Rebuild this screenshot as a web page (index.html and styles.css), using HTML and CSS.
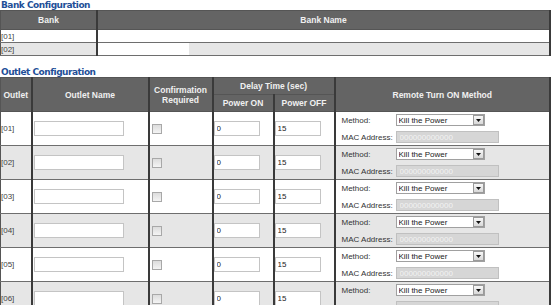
FILE: index.html
```html
<!DOCTYPE html>
<html>
<head>
<title>Outlet Setup</title>
<link rel="stylesheet" href="styles.css">
</head>
<body>

<h2 class="section-title">Bank Configuration</h2>
<table class="grid bank">
  <tr>
    <th class="col-bank">Bank</th>
    <th>Bank Name</th>
  </tr>
  <tr>
    <td class="idx">[01]</td>
    <td><input type="text" class="bank-name"></td>
  </tr>
  <tr class="alt">
    <td class="idx">[02]</td>
    <td><input type="text" class="bank-name"></td>
  </tr>
</table>

<h2 class="section-title outlet-title">Outlet Configuration</h2>
<table class="grid outlets">
  <colgroup>
    <col style="width:31px">
    <col style="width:117px">
    <col style="width:64px">
    <col style="width:61px">
    <col style="width:61px">
    <col>
  </colgroup>
  <thead>
    <tr class="head-top">
      <th rowspan="2">Outlet</th>
      <th rowspan="2">Outlet Name</th>
      <th rowspan="2">Confirmation<br>Required</th>
      <th colspan="2">Delay Time (sec)</th>
      <th rowspan="2">Remote Turn ON Method</th>
    </tr>
    <tr class="head-sub">
      <th>Power ON</th>
      <th>Power OFF</th>
    </tr>
  </thead>
  <tbody id="outletRows"></tbody>
</table>

<script>
var rows = "";
for (var i = 1; i <= 6; i++) {
  var num = "[0" + i + "]";
  rows += '<tr class="' + (i % 2 == 0 ? "alt" : "") + '">' +
    '<td class="idx">' + num + '</td>' +
    '<td class="name-cell"><input type="text" class="outlet-name"></td>' +
    '<td class="check-cell"><input type="checkbox" class="confirm"></td>' +
    '<td class="delay-cell"><input type="text" class="delay" value="0"></td>' +
    '<td class="delay-cell"><input type="text" class="delay" value="15"></td>' +
    '<td class="remote-cell">' +
      '<div class="remote">' +
        '<label>Method:</label>' +
        '<span class="select-wrap"><select><option>Kill the Power</option></select>' +
        '<span class="select-arrow"><svg width="5" height="3" viewBox="0 0 5 3"><path d="M0 0h5L2.5 3z" fill="#111"/></svg></span></span>' +
        '<label>MAC Address:</label>' +
        '<input type="text" class="mac" value="000000000000" disabled>' +
      '</div>' +
    '</td>' +
  '</tr>';
}
document.getElementById("outletRows").innerHTML = rows;
</script>

</body>
</html>
```

FILE: styles.css
```css
body {
  margin: 0;
  font-family: "Liberation Sans", Arial, sans-serif;
  font-size: 9px;
  color: #333;
  background: #fff;
}
.section-title {
  margin: 0 0 0 1px;
  height: 10px;
  line-height: 10px;
  font-family: "DejaVu Sans", Verdana, sans-serif;
  font-size: 9px;
  font-weight: bold;
  color: #1f4f98;
  letter-spacing: -0.5px;
}
.outlet-title {
  margin-top: 10px;
  height: 11px;
  line-height: 12px;
}
.grid {
  width: 551px;
  border-collapse: collapse;
  table-layout: fixed;
}
.grid th {
  background: #646464;
  color: #f0f0f0;
  font-family: "Liberation Sans", Tahoma, sans-serif;
  font-size: 8.5px;
  font-weight: bold;
  text-align: center;
  padding: 0;
  border: 1px solid #555;
  border-left: 2px solid #3a3a3a;
  border-right: 2px solid #3a3a3a;
}
.grid td {
  padding: 0;
  border-top: 1px solid #6e6e6e;
  border-bottom: 1px solid #6e6e6e;
  border-left: 2px solid #3a3a3a;
  border-right: 2px solid #3a3a3a;
  vertical-align: middle;
}
.grid tr.alt td {
  background: #e6e6e6;
}
.grid th:first-child,
.grid td:first-child {
  border-left: 1px solid #555;
}
.bank th {
  height: 18px;
}
.col-bank {
  width: 95px;
}
.bank td {
  height: 12px;
}
.idx {
  font-size: 8px;
  color: #444;
  padding-left: 1px;
}
input[type="text"] {
  box-sizing: border-box;
  margin: 0;
  font-family: "Liberation Sans", Arial, sans-serif;
  font-size: 8px;
  color: #222;
  background: #fff;
}
.bank-name {
  display: block;
  width: 91px;
  height: 12px;
  border: none;
}
.outlets .head-top th {
  height: 16px;
}
.outlets .head-sub th {
  height: 16px;
}
.outlets tbody td {
  height: 33px;
}
.outlet-name {
  display: block;
  width: 90px;
  height: 15px;
  margin-left: 1px !important;
  border: 1px solid #c4c4c4;
}
.check-cell {
  padding-left: 2px !important;
}
.confirm {
  appearance: none;
  display: block;
  margin: 0;
  width: 10px;
  height: 10px;
  border: 1px solid #a8a8a8;
  background: linear-gradient(#dcdcdc, #f4f4f4);
}
.delay {
  display: block;
  width: 46px;
  height: 15px;
  padding: 0 2px;
  border: 1px solid #c4c4c4;
}
.remote-cell {
  padding: 0 0 0 6px !important;
}
.remote {
  display: grid;
  grid-template-columns: 54px auto;
  align-items: center;
  row-gap: 5px;
}
.remote label {
  font-size: 8px;
  color: #333;
}
.select-wrap {
  position: relative;
  display: block;
  width: 89px;
  height: 12px;
}
.select-wrap select {
  appearance: none;
  box-sizing: border-box;
  display: block;
  width: 89px;
  height: 12px;
  margin: 0;
  padding: 0 2px;
  border: 1px solid #a0a0a0;
  background: #fff;
  font-family: "Liberation Sans", Arial, sans-serif;
  font-size: 8px;
  color: #222;
}
.select-arrow {
  position: absolute;
  top: 1px;
  right: 1px;
  width: 11px;
  height: 10px;
  box-sizing: border-box;
  border: 1px solid #9a9a9a;
  background: linear-gradient(#f8f8f8, #d8d8d8);
  display: flex;
  align-items: center;
  justify-content: center;
}
.mac {
  display: block;
  width: 103px;
  height: 12px;
  padding: 0 3px;
  border: 1px solid #c0c0c0;
  background: #d6d6d6 !important;
  color: #f2f2f2 !important;
}
```
